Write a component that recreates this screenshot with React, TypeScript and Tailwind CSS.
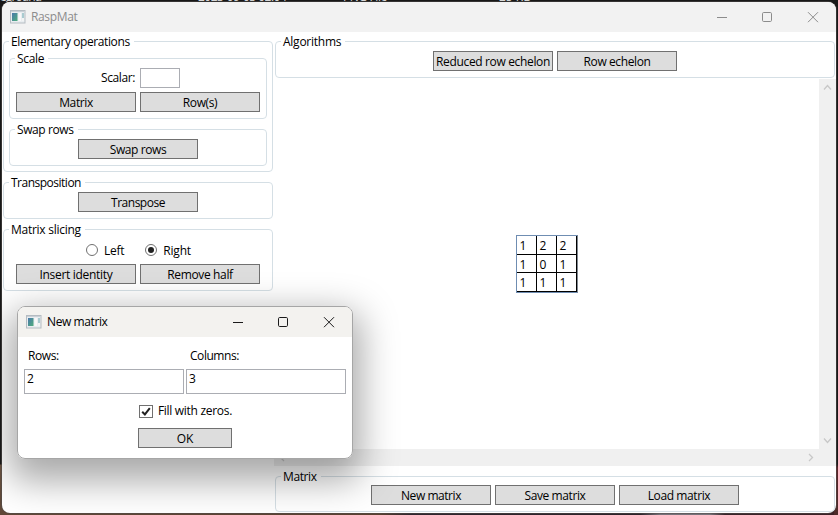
import type { ReactNode } from 'react';

function Text({ children, track = 'tracking-[-0.4px]' }: { children: ReactNode; track?: string }) {
  return <span className={`whitespace-pre ${track}`}>{children}</span>;
}

function Button({ children, track, size = 'w-[120px]' }: { children: ReactNode; track?: string; size?: string }) {
  return (
    <button className={`flex h-5 shrink-0 items-center justify-center border border-[#707070] bg-[#dddddd] pt-px leading-4 ${size}`}>
      <Text track={track}>{children}</Text>
    </button>
  );
}

function Group({ title, track, className, children }: { title: string; track?: string; className: string; children: ReactNode }) {
  return (
    <fieldset className={`min-w-0 rounded-[4px] border border-[#d5dfe5] ${className}`}>
      <legend className="ml-[5px] h-[15px] pr-[4px] pl-[2px] leading-[15px]">
        <Text track={track}>{title}</Text>
      </legend>
      {children}
    </fieldset>
  );
}

function AppIcon() {
  return (
    <svg width="16" height="14" viewBox="0 0 16 14" className="shrink-0">
      <defs>
        <linearGradient id="pane" x1="0" y1="0" x2="1" y2="1">
          <stop offset="0" stopColor="#4a78ac" />
          <stop offset="1" stopColor="#4fae7c" />
        </linearGradient>
      </defs>
      <rect x="0.5" y="0.5" width="14.5" height="12.5" fill="#e9edf0" stroke="#b5bcc2" />
      <rect x="1" y="1" width="13.5" height="1" fill="#c9d0d6" />
      <rect x="2" y="3" width="5.5" height="8" fill="url(#pane)" />
      <rect x="8.5" y="3" width="2.5" height="8" fill="#f8f8f8" />
      <rect x="12" y="3" width="2" height="5" fill="#a9cbd0" />
      <rect x="12" y="8" width="2" height="3" fill="#f2f4f4" />
    </svg>
  );
}

function Controls({ color }: { color: string }) {
  return (
    <svg width="104" height="12" viewBox="0 0 104 12" fill="none" stroke={color} className="shrink-0">
      <path d="M1 6.5h10" />
      <rect x="46.5" y="1.5" width="9" height="9" rx="1.2" />
      <path d="M92 1.2l10 10M102 1.2l-10 10" />
    </svg>
  );
}

function Arrow({ d }: { d: string }) {
  return (
    <svg width="9" height="9" viewBox="0 0 9 9" fill="none" stroke="#c8c8c8" strokeWidth="1.3">
      <path d={d} />
    </svg>
  );
}

function Radio({ on, label, track }: { on?: boolean; label: string; track: string }) {
  return (
    <label className="flex items-center">
      <span className="mr-[6px] flex size-3 items-center justify-center rounded-full border border-[#707070] bg-white">
        {on && <span className="size-[6px] rounded-full bg-[#212121]" />}
      </span>
      <span className="pt-[2px]">
        <Text track={track}>{label}</Text>
      </span>
    </label>
  );
}

const matrix = [
  [1, 2, 2],
  [1, 0, 1],
  [1, 1, 1],
];

export default function App() {
  return (
    <div className="relative h-[515px] w-[838px] overflow-hidden bg-[linear-gradient(to_bottom,#181818_0,#181818_464px,#66503f_465px,#5b4536_515px)] font-['Open_Sans','Noto_Sans',sans-serif] text-[12px] leading-4 text-black">
      <div className="absolute inset-x-0 bottom-0 h-3 bg-[linear-gradient(to_right,#604838_0,#5a4030_380px,#30262e_410px,#2c2229_640px,#77727a_660px,#78737a_710px,#39252a_725px,#3d2026_838px)]" />
      <div className="absolute top-0 right-0 h-[515px] w-1 bg-[linear-gradient(to_bottom,#181818_0,#181818_464px,#5b2428_468px,#4d2b29_515px)]" />
      <div className="absolute inset-x-0 top-0 h-[2px] overflow-hidden text-[#d8d8d8]">
        <div className="-mt-[11px] flex">
          <span className="w-[198px] tracking-[-0.9px]">eground</span>
          <span className="w-[145px] tracking-[-0.5px]">2023-09-03 02:04</span>
          <span className="w-[156px] tracking-[-0.4px]">PNG File</span>
          <span>25 KB</span>
        </div>
      </div>

      <main className="absolute top-[2px] left-[2px] flex h-[511px] w-[834px] flex-col overflow-hidden rounded-[8px] bg-white shadow-[0_0_0_1px_rgba(80,76,74,0.55)]">
        <header className="flex h-[30px] shrink-0 items-center justify-between bg-[#f2f2f2] pr-4 pl-2 text-[#8c8c8c]">
          <div className="flex items-center gap-[5px]">
            <AppIcon />
            <Text track="tracking-[-0.35px]">RaspMat</Text>
          </div>
          <Controls color="#8c8c8c" />
        </header>

        <div className="flex min-h-0 flex-1 pt-[2px] pl-px">
          <aside className="flex w-[270px] shrink-0 flex-col gap-[3px]">
            <Group title="Elementary operations" className="h-[138px]">
              <div className="flex flex-col gap-[3px] px-[5px] pt-[2px]">
                <Group title="Scale" track="tracking-[-0.3px]" className="h-[68px]">
                  <div className="flex items-center pt-[2px] pl-[91px]">
                    <span className="w-[39px]"><Text>Scalar:</Text></span>
                    <input className="h-5 w-10 border border-[#abadb3] bg-white outline-none" />
                  </div>
                  <div className="mt-1 flex gap-1 px-[6px]">
                    <Button>Matrix</Button>
                    <Button>Row(s)</Button>
                  </div>
                </Group>
                <Group title="Swap rows" className="h-[44px]">
                  <div className="flex justify-center pt-[2px]"><Button>Swap rows</Button></div>
                </Group>
              </div>
            </Group>
            <Group title="Transposition" track="tracking-[-0.5px]" className="h-[44px]">
              <div className="flex justify-center pt-[2px]"><Button track="tracking-[-0.5px]">Transpose</Button></div>
            </Group>
            <Group title="Matrix slicing" track="tracking-[-0.27px]" className="h-[69px]">
              <div className="flex h-[23px] gap-[21px] pt-[3px] pl-[82px]">
                <Radio label="Left" track="tracking-[-0.3px]" />
                <Radio label="Right" track="tracking-[-0.15px]" on />
              </div>
              <div className="mt-1 flex gap-1 px-3">
                <Button track="tracking-[-0.3px]">Insert identity</Button>
                <Button track="tracking-[-0.35px]">Remove half</Button>
              </div>
            </Group>
          </aside>

          <section className="ml-px flex w-[562px] flex-col">
            <Group title="Algorithms" track="tracking-[-0.25px]" className="ml-px h-[44px] w-[560px]">
              <div className="flex justify-center gap-1 pt-[2px]">
                <Button track="tracking-[-0.35px]">Reduced row echelon</Button>
                <Button>Row echelon</Button>
              </div>
            </Group>
            <div className="mt-px flex h-[370px]">
              <div className="flex flex-1 items-center justify-center pb-px">
                <div className="grid w-[62px] grid-cols-[20px_20px_20px] grid-rows-[19px_18px_19px] border border-[#6f8db2] border-r-[#808890]">
                  {matrix.flat().map((value, i) => (
                    <span key={i} className="border-r border-b border-black pl-[3px] leading-[19px]">{value}</span>
                  ))}
                </div>
              </div>
              <div className="flex w-[17px] flex-col items-center justify-between bg-[#f0f0f0] py-1">
                <Arrow d="M1 6.5L4.5 2.5L8 6.5" />
                <Arrow d="M1 2.5L4.5 6.5L8 2.5" />
              </div>
            </div>
            <div className="flex h-[17px] items-center justify-between bg-[#f0f0f0] pr-[21px] pl-1">
              <Arrow d="M6 1L2.5 4.5L6 8" />
              <Arrow d="M3 1L6.5 4.5L3 8" />
            </div>
            <Group title="Matrix" className="mt-[3px] ml-px h-[43px] w-[560px]">
              <div className="flex justify-center gap-1 pt-px">
                <Button track="tracking-[-0.45px]">New matrix</Button>
                <Button>Save matrix</Button>
                <Button>Load matrix</Button>
              </div>
            </Group>
          </section>
        </div>

        <div className="pointer-events-none absolute top-[304px] left-[15px] h-[153px] w-[336px] rounded-[8px] shadow-[0_14px_36px_8px_rgba(0,0,0,0.34)]" />
        <div className="absolute top-[304px] left-[15px] flex h-[153px] w-[336px] flex-col overflow-hidden rounded-[8px] border border-[#a6a6a6] bg-white" role="dialog">
          <header className="flex h-[30px] shrink-0 items-center justify-between bg-[#f3f2ef] pr-4 pl-2">
            <div className="flex items-center gap-[5px]">
              <AppIcon />
              <Text>New matrix</Text>
            </div>
            <Controls color="#1a1a1a" />
          </header>
          <div className="flex flex-col items-center px-[6px] pt-[11px]">
            <div className="flex w-full gap-[2px]">
              <div className="w-[160px]">
                <div className="pl-1"><Text>Rows:</Text></div>
                <div className="mt-[5px] h-[25px] border border-[#abadb3] pt-px pl-[2px]">2</div>
              </div>
              <div className="w-[160px]">
                <div className="pl-1"><Text track="tracking-[-0.45px]">Columns:</Text></div>
                <div className="mt-[5px] h-[25px] border border-[#abadb3] pt-px pl-[2px]">3</div>
              </div>
            </div>
            <label className="mt-[9px] ml-px flex items-center gap-[5px]">
              <svg width="14" height="13" viewBox="0 0 14 13" fill="none">
                <rect x="0.5" y="0.5" width="13" height="12" fill="white" stroke="#707070" />
                <path d="M3.2 6.7L5.9 9.4L10.8 3.2" stroke="#212121" strokeWidth="2" />
              </svg>
              <Text track="tracking-[-0.3px]">Fill with zeros.</Text>
            </label>
            <div className="mt-[9px]"><Button size="w-[94px]" track="tracking-[-0.2px]">OK</Button></div>
          </div>
        </div>
      </main>
    </div>
  );
}
